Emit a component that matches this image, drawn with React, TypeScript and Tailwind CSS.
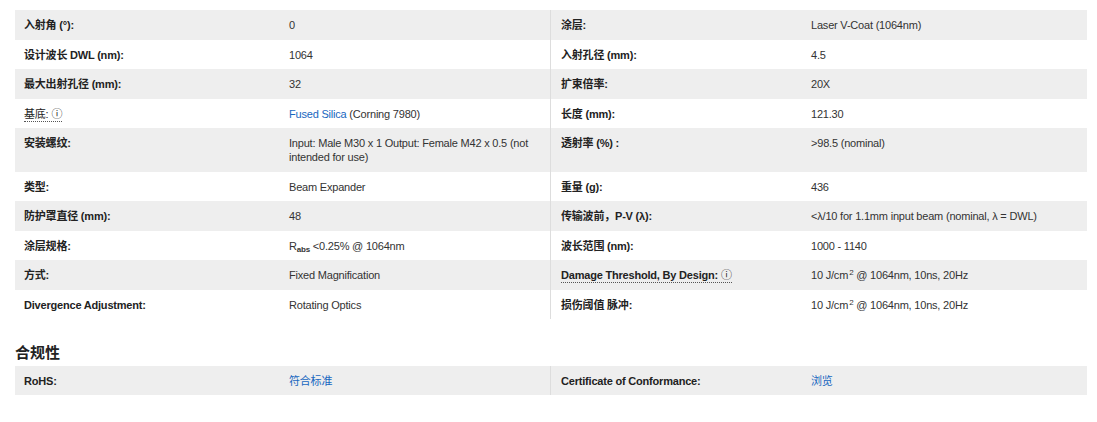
import React from "react";

type Cell = React.ReactNode;
type Row = { l1: Cell; v1: Cell; l2: Cell; v2: Cell; tall?: boolean };

const Info = () => <span className="ml-[3px] font-normal">ⓘ</span>;

const link = "text-[#1867c0]";

const Sup2 = () => <sup className="text-[8px] leading-none ml-[1px]">2</sup>;

const rows: Row[] = [
  { l1: "入射角 (°):", v1: "0", l2: "涂层:", v2: "Laser V-Coat (1064nm)" },
  { l1: "设计波长 DWL (nm):", v1: "1064", l2: "入射孔径 (mm):", v2: "4.5" },
  { l1: "最大出射孔径 (mm):", v1: "32", l2: "扩束倍率:", v2: "20X" },
  {
    l1: (
      <span className="border-b border-dotted border-[#555] pb-[1px] font-normal">
        基底:
        <Info />
      </span>
    ),
    v1: (
      <>
        <span className={link}>Fused Silica</span> (Corning 7980)
      </>
    ),
    l2: "长度 (mm):",
    v2: "121.30",
  },
  {
    l1: "安装螺纹:",
    v1: "Input: Male M30 x 1 Output: Female M42 x 0.5 (not intended for use)",
    l2: "透射率 (%) :",
    v2: ">98.5 (nominal)",
    tall: true,
  },
  { l1: "类型:", v1: "Beam Expander", l2: "重量 (g):", v2: "436" },
  {
    l1: "防护罩直径 (mm):",
    v1: "48",
    l2: "传输波前，P-V (λ):",
    v2: "<λ/10 for 1.1mm input beam (nominal, λ = DWL)",
  },
  {
    l1: "涂层规格:",
    v1: (
      <>
        R<sub className="text-[8px] leading-none font-bold">abs</sub> &lt;0.25% @ 1064nm
      </>
    ),
    l2: "波长范围 (nm):",
    v2: "1000 - 1140",
  },
  {
    l1: "方式:",
    v1: "Fixed Magnification",
    l2: (
      <span className="border-b border-dotted border-[#555] pb-[1px]">
        Damage Threshold, By Design:
        <Info />
      </span>
    ),
    v2: (
      <>
        10 J/cm
        <Sup2 /> @ 1064nm, 10ns, 20Hz
      </>
    ),
  },
  {
    l1: "Divergence Adjustment:",
    v1: "Rotating Optics",
    l2: "损伤阈值 脉冲:",
    v2: (
      <>
        10 J/cm
        <Sup2 /> @ 1064nm, 10ns, 20Hz
      </>
    ),
  },
];

const font = {
  fontFamily: '"Liberation Sans", "Noto Sans CJK SC", sans-serif',
};

export default function App() {
  return (
    <div
      className="w-[1097px] h-[422px] bg-white text-[11px] leading-[14px] text-[#333] tracking-[-0.2px]"
      style={font}
    >
      <div className="pt-[10px] pl-[15px]">
        <div className="w-[1072px]">
          {rows.map((r, i) => (
            <div
              key={i}
              className={`grid grid-cols-[265px_270px_251px_286px] ${
                i % 2 === 0 ? "bg-[#eeeeee]" : "bg-white"
              }`}
            >
              <div className="h-full pl-[9px] pt-[8px] pb-[7.5px] font-bold text-[#222]">{r.l1}</div>
              <div className="pl-[9px] pr-[10px] pt-[8px] pb-[7.5px]">{r.v1}</div>
              <div className="border-l border-[#dddddd] pl-[10px] pt-[8px] pb-[7.5px] font-bold text-[#222]">
                {r.l2}
              </div>
              <div className="pl-[10px] pr-[10px] pt-[8px] pb-[7.5px]">{r.v2}</div>
            </div>
          ))}
        </div>
        <div className="mt-[25px] text-[15px] leading-[18px] font-semibold text-[#222] tracking-normal">
          合规性
        </div>
        <div className="mt-[4px] w-[1072px] grid grid-cols-[265px_270px_251px_286px] bg-[#eeeeee]">
          <div className="pl-[9px] pt-[8px] pb-[7px] font-bold text-[#222]">RoHS:</div>
          <div className={`pl-[9px] pt-[8px] pb-[7px] ${link}`}>符合标准</div>
          <div className="border-l border-[#dddddd] pl-[10px] pt-[8px] pb-[7px] font-bold text-[#222]">
            Certificate of Conformance:
          </div>
          <div className={`pl-[10px] pt-[8px] pb-[7px] ${link}`}>浏览</div>
        </div>
      </div>
    </div>
  );
}
